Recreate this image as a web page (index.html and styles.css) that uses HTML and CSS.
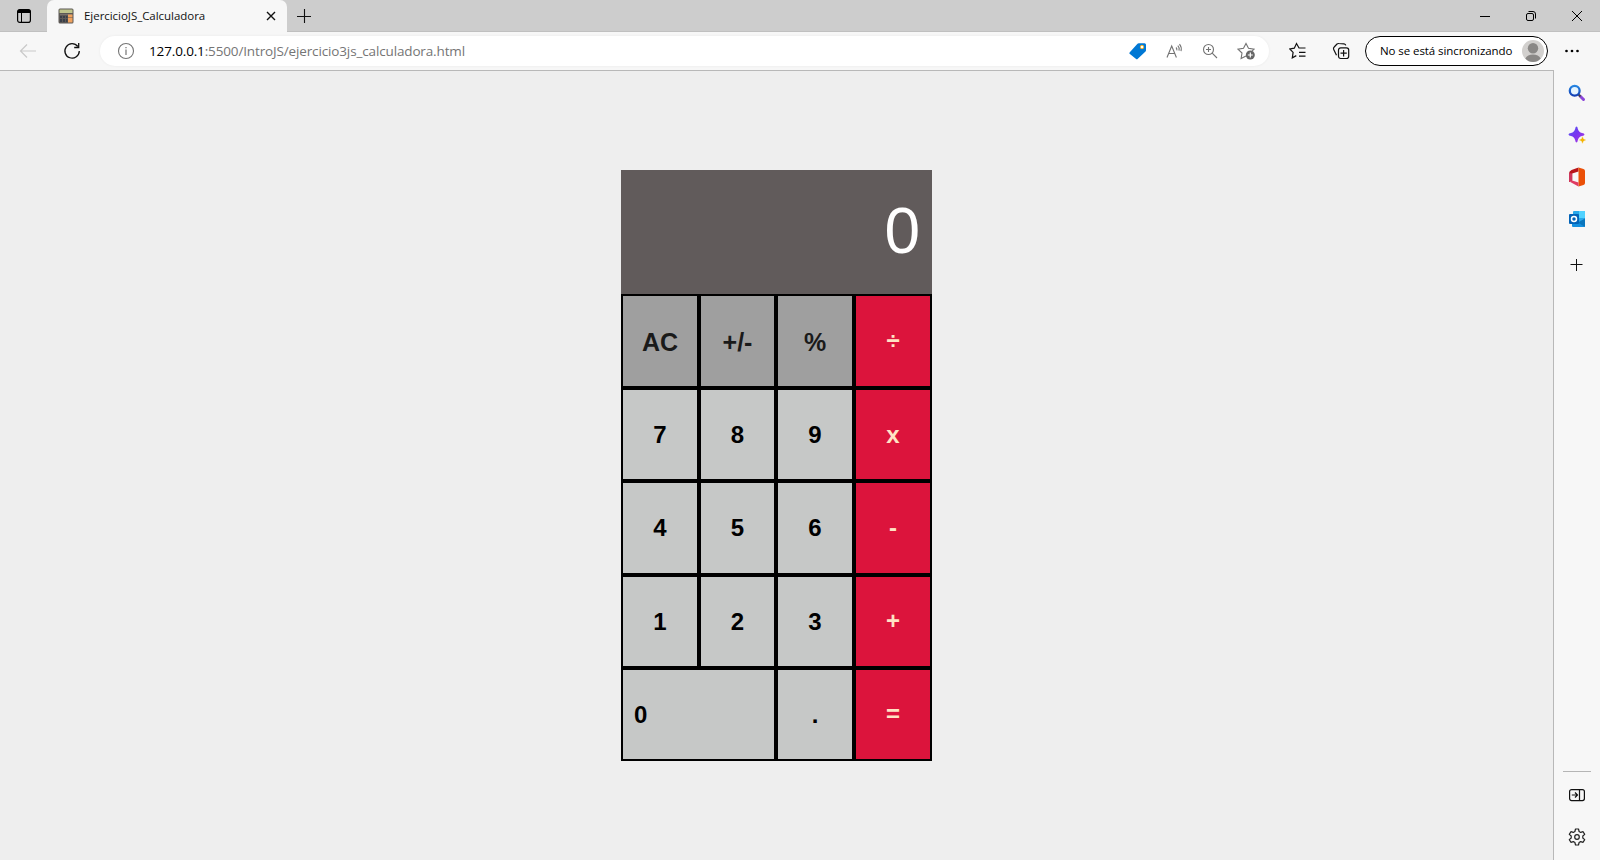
FILE: index.html
```html
<!DOCTYPE html>
<html lang="es">
<head>
<meta charset="utf-8">
<title>EjercicioJS_Calculadora</title>
<link rel="stylesheet" href="styles.css">
</head>
<body>
<div class="browser">
  <header class="titlebar">
    <div class="tab-actions">
      <svg class="icon" width="16" height="16" viewBox="0 0 16 16"><rect x="1.600" y="1.600" width="12.800" height="12.800" rx="2.200" fill="none" stroke="#000" stroke-width="1.200"/><path d="M1.500 5V3.500a2 2 0 0 1 2-2h9a2 2 0 0 1 2 2V5z"/><path d="M5.500 5v9.500" stroke="#000"/></svg>
    </div>
    <div class="tab">
      <svg class="favicon" width="16" height="16" viewBox="0 0 16 16"><rect x=".5" y=".5" width="15" height="15" rx="1.500" fill="#5d5956"/><rect x="1.500" y="1.500" width="13" height="3.500" fill="#bfc58c"/><path d="M2 6.500h12" stroke="#77716c"/><path d="M2 8h2v2H2zM5 8h2v2H5zM8 8h1.500v2H8zM2 11h2v3H2zM5 11h2v3H5zM8 11h1.500v3H8z" fill="#3a3f49"/><path d="M10 6.500h4.500v3H10zM10 10h4.500v4.500H10z" fill="#f0a25e"/></svg>
      <span class="tab-title">EjercicioJS_Calculadora</span>
      <svg class="tab-close" width="10" height="10" viewBox="0 0 10 10"><path d="M1 1l8 8M9 1L1 9" stroke="#111" stroke-width="1.400"/></svg>
    </div>
    <svg class="new-tab" width="16" height="16" viewBox="0 0 16 16"><path d="M8.500 1v14M1 8.500h14" stroke="#111" stroke-width="1.100"/></svg>
    <div class="window-buttons">
      <svg width="12" height="12" viewBox="0 0 12 12"><path d="M1 6.500h10" stroke="#000"/></svg>
      <svg width="12" height="12" viewBox="0 0 12 12" fill="none" stroke="#000"><rect x="1.500" y="3.500" width="7" height="7" rx="1.500"/><path d="M3.500 1.500h4.500a2.500 2.500 0 0 1 2.500 2.500v4.500"/></svg>
      <svg width="12" height="12" viewBox="0 0 12 12"><path d="M1 1l10 10M11 1L1 11" stroke="#000"/></svg>
    </div>
  </header>

  <nav class="toolbar">
    <svg class="back" width="18" height="16" viewBox="0 0 18 16" fill="none" stroke="#c9c9c9" stroke-width="1.200"><path d="M17 8H2M8 1.500L1.500 8 8 14.500"/></svg>
    <svg class="reload" width="18" height="18" viewBox="0 0 18 18" fill="none" stroke="#111" stroke-width="1.300"><path d="M14.800 4.500A7.200 7.200 0 1 0 16.300 9"/><path d="M15.700 1v4.500h-4.500"/></svg>
    <div class="omnibox">
      <svg width="18" height="18" viewBox="0 0 18 18"><circle cx="9" cy="9" r="7.500" fill="none" stroke="#757575" stroke-width="1.100"/><path d="M9 7.500v5.500M9 5v1.300" stroke="#757575" stroke-width="1.200"/></svg>
      <span class="url"><span class="host">127.0.0.1</span>:5500/IntroJS/ejercicio3js_calculadora.html</span>
      <div class="page-actions">
        <svg width="18" height="18" viewBox="0 0 18 18"><path d="M.8 10.300L8.500 1.800q.5-.5 1.200-.5h5.800q1.500 0 1.500 1.500v5.500q0 .7-.5 1.200L8.800 16.700q-1 1-2 0L.9 12.100q-1-.9-.1-1.800z" fill="#0078d4"/><circle cx="13" cy="5" r="1.700" fill="#fff" stroke="#f4b634" stroke-width="1"/></svg>
        <svg width="18" height="18" viewBox="0 0 18 18" fill="none" stroke="#737373" stroke-width="1.100"><path d="M2 15.500L6.700 4l4.700 11.500M3.600 11.500h6.200"/><path d="M11 5.500q1.200 1 .8 2.800M12.800 3.700q2 2 1.200 5M14.500 2.200q2.500 3 1.500 7"/></svg>
        <svg width="18" height="18" viewBox="0 0 18 18" fill="none" stroke="#737373" stroke-width="1.100"><circle cx="7.500" cy="7.500" r="5"/><path d="M11.200 11.200l4.800 4.800M5 7.500h5M7.500 5v5"/></svg>
        <svg width="18" height="18" viewBox="0 0 18 18"><path d="M9 14l-4.900 2.600L5 11 1 7.100l5.500-.8L9 1.400l2.500 4.900 5.500.8-2 2" fill="none" stroke="#737373" stroke-width="1.100"/><circle cx="13.300" cy="13" r="4.500" fill="#666"/><path d="M10.800 13h5M13.300 10.500v5" stroke="#fff" stroke-width="1.200"/></svg>
      </div>
    </div>
    <svg class="favorites" width="18" height="18" viewBox="0 0 18 18" fill="none" stroke="#111" stroke-width="1.200"><path d="M16.500 6H10L7.500 1.500 5.300 6.200l-4.500.7 3.300 3.500-.8 5.400 4-2.200M10 10.300h6.500M10 14.200h6.500"/></svg>
    <svg class="collections" width="18" height="18" viewBox="0 0 18 18" fill="none" stroke="#111" stroke-width="1.200"><rect x="6.500" y="5.800" width="10.200" height="10.700" rx="2.200"/><path d="M11.600 8v6.400M8.500 11.200h6.300M4.500 13.200l-2.800-5.700q-.7-1.500.5-2.500L5 2q.8-.6 1.800-.5l5.200.3q1.500.2 1.800 1.600"/></svg>
    <div class="profile">
      <span class="profile-label">No se está sincronizando</span>
      <svg width="22" height="22" viewBox="0 0 22 22"><circle cx="11" cy="11" r="11" fill="#d2d0ce"/><circle cx="11" cy="8.300" r="5.200" fill="#8a8886"/><path d="M3.300 18.500Q5.500 14.500 11 14.500t7.700 4Q15.500 22 11 22t-7.700-3.500z" fill="#8a8886"/></svg>
    </div>
    <svg class="more" width="16" height="4" viewBox="0 0 16 4"><circle cx="2.500" cy="2" r="1.350"/><circle cx="8" cy="2" r="1.350"/><circle cx="13.500" cy="2" r="1.350"/></svg>
  </nav>

  <div class="content">
    <main class="page">
      <section class="calculator">
        <div class="display">0</div>
        <div class="keys">
          <button class="key fn">AC</button><button class="key fn">+/-</button><button class="key fn">%</button><button class="key op">÷</button>
          <button class="key">7</button><button class="key">8</button><button class="key">9</button><button class="key op">x</button>
          <button class="key">4</button><button class="key">5</button><button class="key">6</button><button class="key op">-</button>
          <button class="key">1</button><button class="key">2</button><button class="key">3</button><button class="key op raised">+</button>
          <button class="key zero">0</button><button class="key">.</button><button class="key op raised">=</button>
        </div>
      </section>
    </main>
    <aside class="sidebar">
      <div class="apps">
        <svg width="18" height="18" viewBox="0 0 18 18"><path d="M12 12l3.500 3.500" stroke="#8b45d9" stroke-width="3" stroke-linecap="round"/><path d="M10 10l2.500 2.500" stroke="#444" stroke-width="2"/><circle cx="6.700" cy="6.700" r="4.900" fill="#e4f4ff" stroke="url(#lens)" stroke-width="2.300"/><defs><linearGradient id="lens" x2="0" y2="1"><stop stop-color="#2786e2"/><stop offset="1" stop-color="#123fb5"/></linearGradient></defs></svg>
        <svg width="18" height="18" viewBox="0 0 18 18"><defs><linearGradient id="spark" x2="1" y2="1"><stop stop-color="#4f5cf5"/><stop offset=".5" stop-color="#7a35ef"/><stop offset="1" stop-color="#b43be0"/></linearGradient></defs><path d="M8.500.5q1 0 1.300 2.200.8 3.500 4.200 4.300 2.500.4 2.500 1.400T14 9.900q-3.400.8-4.200 4.300-.3 2.200-1.300 2.200t-1.300-2.200Q6.400 10.700 3 9.900.5 9.500.5 8.400T3 7q3.400-.8 4.200-4.300Q7.500.5 8.500.5z" fill="url(#spark)"/><path d="M14.500 10l1.200 2.800 2.800 1.200-2.800 1.200-1.200 2.800-1.200-2.800-2.800-1.200 2.800-1.200z" fill="#f4b400" stroke="#f7f7f7" stroke-width=".5"/></svg>
        <svg width="18" height="20" viewBox="0 0 18 20"><path d="M10.500.5L3.500 3Q1 4 1 6.500V15l3.200-1.500v-7l6.300-2z" fill="#b9151b"/><path d="M1 6l3.200.5v7L1 15z" fill="#ce375d"/><path d="M10.500.5l5 1.500Q17 2.500 17 4v12q0 1.500-1.500 2l-5 1.500V4.500z" fill="#eb5008"/><path d="M1.800 14.800l2.400-1.300 6.300 2v4z" fill="#e03c62"/></svg>
        <svg width="18" height="18" viewBox="0 0 18 18"><rect x="5" y="1" width="12" height="14" rx="1" fill="#28a8ea"/><path d="M11 1h5q1 0 1 1v6h-6z" fill="#50d2ff"/><path d="M4 9l6.500 4L17 8.500V16q0 1-1 1H5q-1 0-1-1z" fill="#1490df"/><path d="M17 8.500V17l-7-4.500z" fill="#0b76bd"/><rect x="1" y="4" width="10" height="10" rx="1" fill="#0364b8"/><circle cx="6" cy="9" r="2.500" fill="none" stroke="#fff" stroke-width="1.500"/></svg>
        <svg width="14" height="14" viewBox="0 0 14 14"><path d="M6.500 1v12M.5 6.500h12" stroke="#111"/></svg>
      </div>
      <div class="tools">
        <svg width="18" height="14" viewBox="0 0 18 14" fill="none" stroke="#111" stroke-width="1.200"><rect x="1.600" y="1.600" width="14.800" height="11" rx="2"/><path d="M11.500 1.500v11M3.800 7h5.500M7 4.500L9.500 7 7 9.500"/></svg>
        <svg width="18" height="18" viewBox="0 0 18 18" fill="none" stroke="#222" stroke-width="1.200"><path d="M7.500 1h3l.6 2.500 1.600.9 2.400-.7 1.600 2.700L14.800 8v2l1.900 1.600-1.600 2.700-2.400-.7-1.600.9-.6 2.500h-3l-.6-2.500-1.600-.9-2.400.7-1.600-2.700L3.200 10V8L1.300 6.400l1.600-2.700 2.400.7 1.600-.9z" stroke-linejoin="round"/><circle cx="9" cy="9" r="2.300"/></svg>
      </div>
    </aside>
  </div>
</div>
</body>
</html>
```

FILE: styles.css
```css
* { box-sizing: border-box; }
body { margin: 0; font-family: "Open Sans", "Noto Sans", sans-serif; }
svg { display: block; flex: none; }

.browser { display: flex; flex-direction: column; width: 1600px; height: 860px; background: #f7f7f7; overflow: hidden; }

.titlebar { display: flex; align-items: center; height: 32px; background: #cdcdcd; box-shadow: inset 0 -1px #c0c0c0; }
.tab-actions { display: flex; align-items: center; justify-content: center; width: 47px; height: 32px; }
.tab { display: flex; align-items: center; width: 240px; height: 32px; padding: 0 11px; background: #f7f7f7; border-radius: 7px 7px 0 0; }
.tab-title { flex: 1; margin-left: 10px; font-size: 11.5px; line-height: 16px; white-space: nowrap; color: #111; letter-spacing: -0.04px; }
.new-tab { margin-left: 9px; }
.window-buttons { display: flex; gap: 34px; margin-left: auto; margin-right: 17px; }

.toolbar { display: flex; align-items: center; height: 38px; padding-bottom: 1px; }
.back { margin-left: 19px; }
.reload { margin-left: 26px; }
.omnibox { display: flex; align-items: center; width: 1169px; height: 30px; margin-left: 19px; padding: 0 14px 0 17px; background: #fff; border-radius: 15px; box-shadow: 0 0 3px rgba(0, 0, 0, .06); }
.url { margin-left: 14px; font-size: 13.5px; line-height: 18px; letter-spacing: -0.14px; color: #757575; white-space: nowrap; }
.host { color: #000; }
.page-actions { display: flex; gap: 18px; margin-left: auto; }
.favorites { margin-left: 20px; }
.collections { margin-left: 25px; }
.profile { display: flex; align-items: center; justify-content: space-between; width: 183px; height: 30px; margin-left: 15px; padding: 0 3px 0 14px; border: 1px solid #000; border-radius: 15px; background: #fff; }
.profile-label { font-size: 11.5px; line-height: 16px; letter-spacing: -0.08px; white-space: nowrap; }
.more { margin-left: 16px; }

.content { display: flex; flex: 1; }
.page { display: flex; justify-content: center; align-items: flex-start; width: 1554px; padding-top: 99px; background: #eee; border-top: 1px solid #b8b8b8; border-right: 1px solid #b8b8b8; }

.calculator { width: 311px; font-family: "Liberation Sans", Arial, sans-serif; }
.display { height: 124px; padding: 0 12px; background: #615b5b; color: #fff; font-size: 64px; line-height: 123px; text-align: right; }
.keys { display: grid; grid-template-columns: 78px 77px 78px 78px; grid-template-rows: 94px 93px 94px 93px 93px; }
.key { margin: 0; padding: 0; border: 2px solid #000; border-radius: 0; background: #c6c8c7; color: #000; font: bold 24px/28px "Liberation Sans", Arial, sans-serif; text-align: center; }
.key.fn { padding-top: 1px; background: #9f9f9f; color: #1a1a1a; font-size: 25px; }
.key.op { background: #dc143c; color: #ffe4c4; }
.key.raised { padding-bottom: 2px; }
.key.zero { grid-column: span 2; padding-left: 11px; text-align: left; }

.sidebar { display: flex; flex-direction: column; justify-content: space-between; flex: 1; }
.apps { display: flex; flex-direction: column; align-items: center; gap: 24px; padding-top: 14px; }
.apps svg:nth-child(3) { margin: -1px 0; }
.apps svg:last-child { margin-top: 6px; }
.tools { display: flex; flex-direction: column; align-items: center; gap: 26px; width: 28px; margin-left: 9px; padding: 16px 0 14px; border-top: 1px solid #b5b5b5; }
```
